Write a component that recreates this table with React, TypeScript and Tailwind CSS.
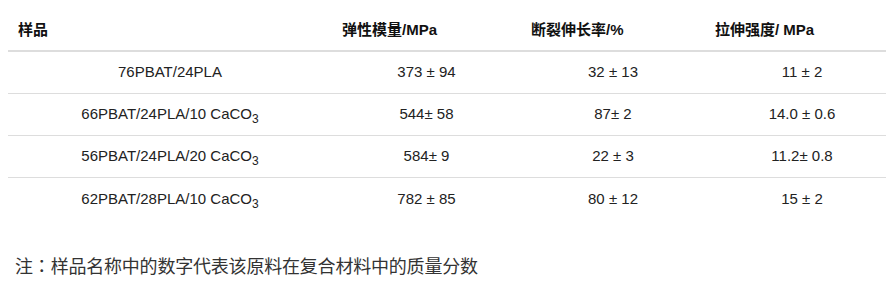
import React from "react";

const font = { fontFamily: '"Liberation Sans", Arial, "Noto Sans CJK SC", sans-serif' };

function Ca({ pre }: { pre: string }) {
  return (
    <span>
      {pre} CaCO<span className="text-[12px] relative top-[4px]">3</span>
    </span>
  );
}

const rows: [React.ReactNode, string, string, string][] = [
  ["76PBAT/24PLA", "373 ± 94", "32 ± 13", "11 ± 2"],
  [<Ca pre="66PBAT/24PLA/10" />, "544± 58", "87± 2", "14.0 ± 0.6"],
  [<Ca pre="56PBAT/24PLA/20" />, "584± 9", "22 ± 3", "11.2± 0.8"],
  [<Ca pre="62PBAT/28PLA/10" />, "782 ± 85", "80 ± 12", "15 ± 2"],
];

export default function App() {
  return (
    <div className="w-[886px] h-[284px] overflow-hidden bg-white pt-2 pl-2" style={font}>
      <div className="w-[891px]">
        <div className="grid grid-cols-[324px_189px_184px_194px] h-[44px] items-center pt-[3px] border-b-2 border-[#dddddd] text-[15px] font-bold text-[#111]">
          <div className="pl-[10px]">样品</div>
          <div className="pl-[10px]">弹性模量/MPa</div>
          <div className="pl-[10px]">断裂伸长率/%</div>
          <div className="pl-[10px]">拉伸强度/ MPa</div>
        </div>
        {rows.map((r, i) => (
          <div
            key={i}
            className={
              "grid grid-cols-[324px_189px_184px_194px] h-[42px] items-center text-center text-[15px] text-[#222] " +
              (i < 3 ? "border-b border-[#dddddd]" : "")
            }
          >
            <div>{r[0]}</div>
            <div>{r[1]}</div>
            <div>{r[2]}</div>
            <div>{r[3]}</div>
          </div>
        ))}
      </div>
      <div className="mt-[32px] pl-[7px] text-[18px] leading-[27px] text-[#333] tracking-[-0.2px]">
        注<span style={{ fontFamily: '"Noto Sans CJK TC", sans-serif' }}>：</span>样品名称中的数字代表该原料在复合材料中的质量分数
      </div>
    </div>
  );
}
